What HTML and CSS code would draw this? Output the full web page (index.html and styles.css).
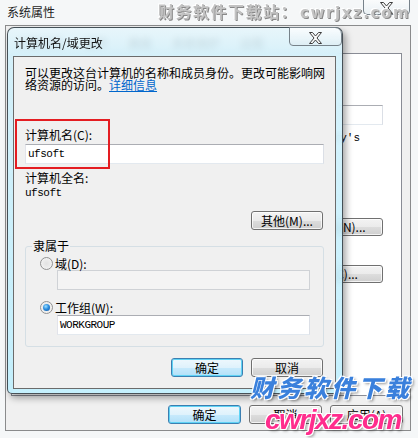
FILE: index.html
```html
<!DOCTYPE html>
<html lang="zh-CN">
<head>
  <meta charset="UTF-8">
  <meta name="viewport" content="width=device-width, initial-scale=1.0">
  <title>系统属性</title>
  <link rel="stylesheet" href="styles.css">
</head>
<body>
<div class="window">
  <div class="win-title">
    <span class="win-caption">系统属性</span>
    <button class="close-btn win-close">
      <svg width="15" height="12" viewBox="0 0 15 12"><path d="M1.5 0.5h3l3 3.5 3-3.5h3l-4.5 5.5 4.5 5.5h-3l-3-3.5-3 3.5h-3l4.5-5.5z" fill="#fafafa" stroke="#3d3d3d"/></svg>
    </button>
  </div>

  <div class="win-client">
    <div class="tabs">
      <span class="tab">计算机名</span>
      <span class="tab">硬件</span>
      <span class="tab">高级</span>
      <span class="tab">系统保护</span>
      <span class="tab">远程</span>
    </div>

    <div class="tab-page">
      <div class="desc-row">
        <span>计算机描述(D):</span>
        <div class="textbox desc-box"></div>
      </div>
      <p class="example">例如: "Kitchen Computer" 或 "Mary's</p>
      <div class="page-action first"><button class="btn wide">网络 ID(N)...</button></div>
      <div class="page-action"><button class="btn wide">更改(C)...</button></div>
    </div>

    <div class="button-row">
      <button class="btn default">确定</button>
      <button class="btn">取消</button>
      <button class="btn">应用(A)</button>
    </div>
  </div>

  <!-- child dialog on top of the properties window -->
  <div class="dialog">
    <div class="dlg-title">
      <span class="dlg-caption">计算机名/域更改</span>
      <button class="close-btn dlg-close">
        <svg width="15" height="12" viewBox="0 0 15 12"><path d="M1.5 0.5h3l3 3.5 3-3.5h3l-4.5 5.5 4.5 5.5h-3l-3-3.5-3 3.5h-3l4.5-5.5z" fill="#fafafa" stroke="#3d3d3d"/></svg>
      </button>
    </div>

    <div class="dlg-client">
      <p class="intro">可以更改这台计算机的名称和成员身份。更改可能影响网<br>络资源的访问。<a href="#" class="link">详细信息</a></p>

      <div class="label name-label">计算机名(C):</div>
      <div class="textbox field">ufsoft</div>

      <div class="label full-label">计算机全名:</div>
      <div class="mono full-name">ufsoft</div>

      <div class="more-row"><button class="btn">其他(M)...</button></div>

      <fieldset class="member">
        <legend>隶属于</legend>
        <div class="radio-row first">
          <span class="radio"></span>
          <span>域(D):</span>
        </div>
        <div class="textbox indent disabled"></div>
        <div class="radio-row second">
          <span class="radio checked"></span>
          <span>工作组(W):</span>
        </div>
        <div class="textbox indent workgroup">WORKGROUP</div>
      </fieldset>

      <div class="dlg-buttons">
        <button class="btn default">确定</button>
        <button class="btn">取消</button>
      </div>

      <div class="highlight"></div>
    </div>
  </div>

  <div class="mark-top">财务软件下载站：<span class="mark-top-url">cwrjxz.com</span></div>
  <div class="mark-cn">财务软件下载</div>
  <div class="mark-url">cwrjxz.com</div>
</div>
</body>
</html>
```

FILE: styles.css
```css
* {
  box-sizing: border-box;
}
body {
  margin: 0;
  font-family: "Noto Sans CJK SC", "Noto Sans", sans-serif;
  font-size: 12px;
  color: #000;
}
p {
  margin: 0;
}
.window {
  position: relative;
  width: 418px;
  height: 438px;
  overflow: hidden;
  background: #f5f7f8;
}

/* title bar of the properties window */
.win-title {
  display: flex;
  justify-content: space-between;
  align-items: flex-start;
  height: 25px;
  padding-left: 7px;
}
.win-caption {
  margin-top: 6px;
  line-height: 12px;
  color: #1e1e1e;
}
.close-btn {
  display: flex;
  justify-content: center;
  align-items: center;
  padding: 0;
  border: 1px solid #77828a;
  background: linear-gradient(rgba(255, 255, 255, 0.75), rgba(222, 234, 240, 0.5));
}
.win-close {
  width: 47px;
  height: 18px;
  margin: -3px 8px 0 0;
  padding-top: 3px;
  border-radius: 0 0 4px 4px;
}

.win-client {
  display: flex;
  flex-direction: column;
  width: 406px;
  height: 406px;
  margin-left: 5px;
  border: 1px solid #8a8b8c;
  background: #f0f0f0;
}
.tabs {
  display: flex;
  align-items: flex-end;
  height: 27px;
}
.tab {
  height: 21px;
  padding: 0 10px;
  line-height: 21px;
  color: #333;
}
.tab-page {
  width: 391px;
  height: 343px;
  margin-left: 5px;
  border: 1px solid #898c95;
  background: #fff;
}
.desc-row {
  display: flex;
  justify-content: space-between;
  align-items: center;
  margin-top: 51px;
  padding: 0 18px 0 14px;
}
.desc-box {
  width: 250px;
  height: 18px;
  border-color: #c3c9d0 #dfe3e8 #e3e9ef #dfe3e8;
}
.example {
  margin-top: 7px;
  padding-right: 41px;
  text-align: right;
  line-height: 12px;
  font-family: "Liberation Mono", "Noto Sans CJK SC", monospace;
  font-size: 11px;
  white-space: nowrap;
}
.page-action {
  display: flex;
  justify-content: flex-end;
  margin-top: 29px;
  padding-right: 18px;
}
.page-action.first {
  margin-top: 74px;
}
.btn.wide {
  width: 100px;
  height: 18px;
  line-height: 16px;
}
.button-row {
  display: flex;
  justify-content: flex-end;
  gap: 8px;
  margin-top: 9px;
  padding-right: 7px;
}
.button-row .btn {
  width: 73px;
}

/* push buttons */
.btn {
  display: block;
  width: 72px;
  height: 19px;
  padding: 0;
  border: 1px solid #707070;
  border-radius: 3px;
  background: linear-gradient(#f3f3f3 0%, #ebebeb 50%, #dddddd 51%, #cfcfcf 100%);
  box-shadow: inset 0 0 0 1px rgba(255, 255, 255, 0.75);
  font: inherit;
  line-height: 17px;
  text-align: center;
  color: #000;
}
.btn.default {
  border-color: #3c7fb1;
  background: linear-gradient(#eef8fd 0%, #dff2fc 50%, #c8eafc 51%, #b2e0f8 100%);
  box-shadow: inset 0 0 0 1px #5fd3f5;
}

/* change dialog */
.dialog {
  position: absolute;
  left: 7px;
  top: 27px;
  display: flex;
  flex-direction: column;
  width: 336px;
  height: 367px;
  padding: 0 6px 4px 5px;
  border: 1px solid rgba(45, 52, 58, 0.85);
  border-radius: 7px 7px 5px 5px;
  background: linear-gradient(180deg, rgba(230, 246, 252, 0.86) 0px, rgba(208, 240, 251, 0.86) 30px, rgba(192, 239, 253, 0.92) 100%);
  backdrop-filter: blur(3px);
  box-shadow: 3px 4px 7px rgba(0, 0, 0, 0.35);
}
.dlg-title {
  display: flex;
  justify-content: space-between;
  align-items: flex-start;
  height: 28px;
}
.dlg-caption {
  margin: 9px 0 0 1px;
  line-height: 12px;
  color: #111;
}
.dlg-close {
  width: 53px;
  height: 19px;
  margin: -1px -6px 0 0;
  padding-top: 2px;
  border-radius: 0 7px 4px 4px;
}
.dlg-client {
  position: relative;
  flex: 1;
  padding: 10px 11px 0;
  border: 1px solid #6b6b6b;
  background: #f0f0f0;
}
.intro {
  line-height: 12px;
  white-space: nowrap;
}
.link {
  color: #0066cc;
}
.label {
  line-height: 12px;
}
.name-label {
  margin-top: 38px;
}
.full-label {
  margin-top: 8px;
}
.textbox {
  height: 20px;
  padding-left: 2px;
  border: 1px solid;
  border-color: #abadb3 #dbdfe6 #e3e9ef #e2e3ea;
  background: #fff;
  font-family: "Liberation Mono", monospace;
  font-size: 11px;
  line-height: 18px;
  letter-spacing: -0.5px;
}
.field {
  margin-top: 3px;
}
.mono {
  font-family: "Liberation Mono", monospace;
  font-size: 11px;
  letter-spacing: -0.5px;
}
.full-name {
  margin-top: 3px;
  line-height: 12px;
}
.more-row {
  display: flex;
  justify-content: flex-end;
  margin-top: 12px;
  padding-right: 1px;
}

/* group box */
.member {
  margin: 10px 0 0;
  padding: 0 13px 11px 6px;
  border: 1px solid #d5dfe5;
  border-radius: 3px;
}
.member legend {
  padding: 0 1px;
  line-height: 12px;
}
.radio-row {
  display: flex;
  align-items: center;
  gap: 2px;
  height: 13px;
  margin-left: 8px;
}
.radio-row.first {
  margin-top: 5px;
}
.radio-row.second {
  margin-top: 11px;
}
.radio {
  position: relative;
  width: 13px;
  height: 13px;
  border: 1px solid #929292;
  border-radius: 50%;
  background: radial-gradient(circle, #e2e2e2 0, #ececec 50%, #f8f8f8 100%);
}
.radio.checked::after {
  content: "";
  position: absolute;
  left: 2px;
  top: 2px;
  width: 7px;
  height: 7px;
  border-radius: 50%;
  background: radial-gradient(circle at 40% 35%, #9ee0ff 0, #2c8ee0 45%, #0b4f9c 100%);
}
.indent {
  margin-left: 25px;
}
.disabled {
  border-color: #cfd2d6;
  background: #f4f4f4;
}
.workgroup {
  margin-top: 1px;
}
.dlg-buttons {
  display: flex;
  justify-content: flex-end;
  gap: 8px;
  margin-top: 11px;
  padding-right: 1px;
}

/* red frame round the name field */
.highlight {
  position: absolute;
  left: 1px;
  top: 62px;
  width: 95px;
  height: 50px;
  border: 2px solid #e41d22;
}

/* site stamps */
.mark-top {
  position: absolute;
  left: 158px;
  top: 2px;
  font-size: 16px;
  font-weight: bold;
  line-height: 18px;
  letter-spacing: 1.5px;
  color: #c2c2c2;
  text-shadow: 1px 1px 0 #888, -1px -1px 0 #fff;
  filter: blur(0.4px);
  white-space: nowrap;
}
.mark-top-url {
  margin-left: 2px;
  font-family: "DejaVu Sans", sans-serif;
  font-size: 15px;
  letter-spacing: 1.6px;
}
.mark-cn {
  position: absolute;
  left: 250px;
  top: 375px;
  font-size: 24px;
  font-weight: 900;
  font-style: italic;
  line-height: 24px;
  letter-spacing: 3px;
  color: #3a80dc;
  text-shadow: 1px 1px 0 #fff, -1px -1px 0 #fff, 1px -1px 0 #fff, -1px 1px 0 #fff, 2px 2px 3px rgba(0, 0, 0, 0.45);
  white-space: nowrap;
}
.mark-url {
  position: absolute;
  left: 265px;
  top: 406px;
  font-family: "Liberation Sans", sans-serif;
  font-size: 28px;
  font-weight: bold;
  font-style: italic;
  line-height: 28px;
  letter-spacing: -1.5px;
  color: #ff2d8d;
  text-shadow: 1px 1px 0 #fff, -1px -1px 0 #fff, 1px -1px 0 #fff, -1px 1px 0 #fff, 2px 2px 3px rgba(0, 0, 0, 0.4);
  white-space: nowrap;
}
```
